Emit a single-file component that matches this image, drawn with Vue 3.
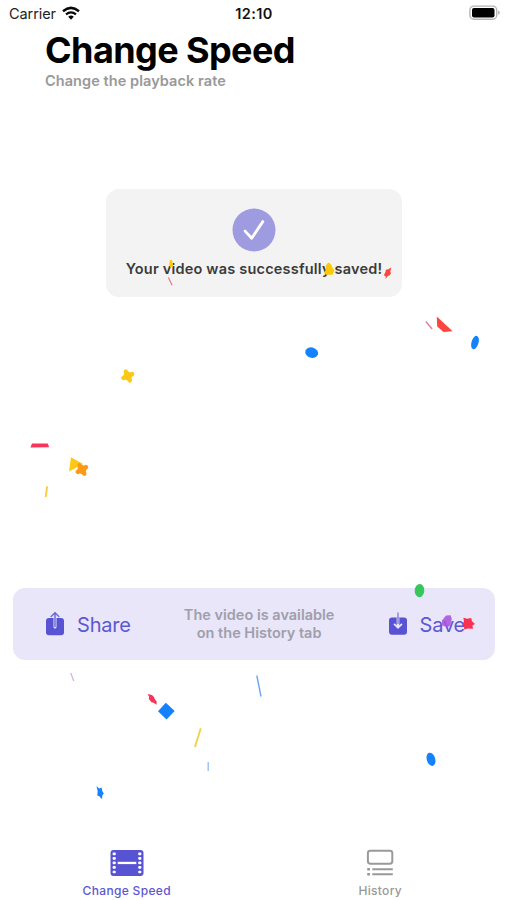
<script setup>
const ellipses = [
  { x: 311.7, y: 352.6, rx: 6.5, ry: 5.2, r: 18, c: '#1382fb' },
  { x: 475, y: 342.5, rx: 3.5, ry: 6.9, r: 17, c: '#1382fb' },
  { x: 419.5, y: 590.6, rx: 4.8, ry: 6.6, r: 3, c: '#35c75c' },
  { x: 431, y: 759.3, rx: 4.2, ry: 6.8, r: -17, c: '#1382fb' },
]
const shapes = [
  { d: 'M169.8 260.3L171.6 259.8L172.8 263L173 266.3L170.5 267.5L169.2 265Z', c: '#fdc908' },
  { d: 'M328.3 262.6L331 264.2L332.3 267.5L334.4 270.3L332.7 274.7L326 274.7L324.2 272.5L326.2 269.4L325.8 265.5Z', c: '#fdc908' },
  { d: 'M391.3 267.2L390.3 271.8L391 273.2L389.5 275.6L388 275.7L385.5 279L385.7 276.2L383.8 275.3L385.5 272L385.8 269.8L388.5 269.3Z', c: '#fb463f' },
  { d: 'M436.8 316.6L452.7 331.3L443.5 332L437.2 326.6Z', c: '#fb463f' },
  { d: 'M32 443.6L47.7 443.4L49.2 447.2L30.4 447.5Z', c: '#f53658' },
  { d: 'M71 457.3L83.2 464L69 471.4Z', c: '#fdc919' },
  { d: 'M158 711.2L165.8 702.7L174.7 711L166.5 719.6Z', c: '#1382fb' },
  { d: 'M147.6 694L152 695L154 697L155 699.5L156.7 701.4L156.5 704.8L153.5 702.8L151.5 702.3L148.8 698.9L149.2 697.1Z', c: '#f53658' },
  { d: 'M96.4 786.3L99.3 788.4L101.5 787.5L102.4 791.2L103.8 793.6L102.4 795.3L102 799.2L99.3 796.2L97.3 795.6L97.7 791Z', c: '#1382fb' },
  { d: 'M442 620.5L446 615.5L450.7 615.2L451.8 619L450.2 625.5L447.2 627.2L441.8 625.3Z', c: '#aa52de', o: .87 },
  { d: 'M463.4 617.8L467 618.7L471.2 617.9L472 621.2L475 624.1L472.4 625.6L473 628.8L467.8 628.4L464.2 629.4L464 625.7L462.6 623.4L464 621.7Z', c: '#fb3152' },
]
const slivers = [
  { p: [168.4, 277.4, 172.1, 285.2], c: '#ee7191', w: 1.2 },
  { p: [425.8, 321.5, 432.1, 329], c: '#e7819a', w: 1.5 },
  { p: [47.1, 486.3, 45.8, 497], c: '#f6ce45', w: 2 },
  { p: [70.7, 673, 73.8, 681], c: '#d9b2e4', w: 1.3 },
  { p: [256.8, 675.5, 261, 696.5], c: '#6ba6ed', w: 1.4 },
  { p: [200.8, 728.3, 195, 747], c: '#f4cf4b', w: 1.9 },
  { p: [208.2, 762, 208.2, 771], c: '#9fc5f5', w: 1.5 },
]
const clovers = [
  { x: 127.8, y: 376, r: 20, c: '#fdc919' },
  { x: 81.9, y: 469.5, r: 15, c: '#fd9915' },
]
</script>

<template>
  <main class="screen">
    <div class="status">
      <div class="carrier">
        <span>Carrier</span>
        <svg width="18" height="14" viewBox="0 0 18 14" fill="none" stroke="#080808">
          <path d="M1 5.2Q9-1.4 17 5.2" stroke-width="2.5" />
          <path d="M4 8.4Q9 4.3 14 8.4" stroke-width="2.3" />
          <path d="M6.2 10.7Q9 8.5 11.8 10.7L9 13.7Z" fill="#080808" stroke="none" />
        </svg>
      </div>
      <span class="time">12:10</span>
      <svg class="battery" width="32" height="16" viewBox="0 0 32 16">
        <rect x=".9" y="1.1" width="26.8" height="13.2" rx="4" fill="#fff" stroke="#b4b4b4" stroke-width="1.4" />
        <rect x="3" y="3" width="22.5" height="9.5" rx="2" fill="#000" />
        <path d="M29.2 5.5Q32.4 7.7 29.2 9.9Z" fill="#aaa" />
      </svg>
    </div>

    <header class="heading">
      <h1>Change Speed</h1>
      <p>Change the playback rate</p>
    </header>

    <section class="notice">
      <svg width="44" height="44" viewBox="0 0 44 44">
        <circle cx="22" cy="22" r="21.5" fill="#9f9be1" />
        <path d="M13.1 23.1L19.7 30.2L30.8 13.6" fill="none" stroke="#fff" stroke-width="2.8" stroke-linecap="round" stroke-linejoin="round" />
      </svg>
      <p>Your video was successfully saved!</p>
    </section>

    <section class="actions">
      <button class="share">
        <svg width="20" height="26" viewBox="0 0 20 26">
          <rect x="1" y="7" width="18" height="17.2" rx="3" fill="#5753d2" />
          <path d="M10 7.5V16" stroke="#e8e6fa" stroke-width="3" stroke-linecap="round" />
          <path d="M10 15.5V2M6.2 5.4L10 1.8L13.8 5.4" fill="none" stroke="#6a66d8" stroke-width="1.4" stroke-linecap="round" />
        </svg>
        <span>Share</span>
      </button>
      <p>The video is available<br>on the History tab</p>
      <button class="save">
        <svg width="20" height="26" viewBox="0 0 20 26">
          <rect x="1" y="6.5" width="18" height="17.2" rx="3" fill="#5753d2" />
          <path d="M10 6.5V15" stroke="#e8e6fa" stroke-width="2.7" />
          <path d="M10 14V15.5M6.5 13.4L10 16.7L13.5 13.4" fill="none" stroke="#e8e6fa" stroke-width="1.8" stroke-linecap="round" />
          <path d="M10 1.6V13" stroke="#7c78dc" stroke-width="1.3" />
        </svg>
        <span>Save</span>
      </button>
    </section>

    <nav class="tabs">
      <div class="tab active">
        <svg width="34" height="28" viewBox="0 0 34 28">
          <rect x=".5" y="1" width="33" height="26" rx="3" fill="#5753d2" />
          <g fill="#fff">
            <template v-for="n in 5" :key="n">
              <rect x="2.6" :y="n * 4.55 - 1.1" width="3.2" height="2.7" rx="1" />
              <rect x="28.2" :y="n * 4.55 - 1.1" width="3.2" height="2.7" rx="1" />
            </template>
            <rect x="7.7" y="12.8" width="18.6" height="2.3" />
          </g>
        </svg>
        <span>Change Speed</span>
      </div>
      <div class="tab">
        <svg width="34" height="28" viewBox="0 0 34 28" fill="none" stroke="#999">
          <rect x="4.9" y="1.7" width="24.4" height="13" rx="2.4" stroke-width="2" />
          <path d="M9.3 20.3H29.8M9.3 25.3H29.8" stroke-width="1.9" />
          <path d="M4.2 20.3H7M4.2 25.3H7" stroke-width="2.4" />
        </svg>
        <span>History</span>
      </div>
    </nav>

    <svg class="confetti" width="507" height="900" viewBox="0 0 507 900">
      <ellipse v-for="(e, i) in ellipses" :key="'e' + i" :cx="e.x" :cy="e.y" :rx="e.rx" :ry="e.ry" :fill="e.c" :transform="`rotate(${e.r} ${e.x} ${e.y})`" />
      <path v-for="(s, i) in shapes" :key="'s' + i" :d="s.d" :fill="s.c" :opacity="s.o || 1" />
      <line v-for="(l, i) in slivers" :key="'l' + i" :x1="l.p[0]" :y1="l.p[1]" :x2="l.p[2]" :y2="l.p[3]" :stroke="l.c" :stroke-width="l.w" />
      <g v-for="(k, i) in clovers" :key="'k' + i" :fill="k.c" :transform="`translate(${k.x} ${k.y}) rotate(${k.r})`">
        <rect x="-4.4" y="-4.4" width="8.8" height="8.8" rx="1" />
        <circle cx="-3.4" cy="-3.4" r="2.2" />
        <circle cx="3.4" cy="-3.4" r="2.2" />
        <circle cx="-3.4" cy="3.4" r="2.2" />
        <circle cx="3.4" cy="3.4" r="2.2" />
      </g>
    </svg>
  </main>
</template>

<style>
body { margin: 0; background: #fff; }
</style>

<style scoped>
.screen {
  position: relative;
  display: flex;
  flex-direction: column;
  width: 507px;
  height: 900px;
  overflow: hidden;
  background: #fff;
  font-family: Inter, "Liberation Sans", sans-serif;
}
h1, p { margin: 0; }
span, h1, p { white-space: nowrap; }
svg { display: block; flex: none; }
.status {
  display: grid;
  grid-template-columns: 1fr auto 1fr;
  align-items: center;
  height: 26px;
  padding: 0 6px 0 9px;
  box-sizing: border-box;
  font-size: 14.5px;
  color: #222;
}
.carrier { display: flex; align-items: center; gap: 6px; letter-spacing: -0.08px; }
.time { font-weight: 600; color: #111; letter-spacing: 0.4px; margin-right: 2px; }
.battery { justify-self: end; }
.heading { padding: 2px 45px 0; height: 163px; box-sizing: border-box; }
h1 {
  font-size: 36px;
  line-height: 44px;
  font-weight: 700;
  letter-spacing: -0.58px;
  color: #000;
}
.heading p {
  font-size: 14.5px;
  line-height: 18px;
  font-weight: 600;
  letter-spacing: 0.07px;
  color: #999;
}
.notice {
  display: flex;
  flex-direction: column;
  align-items: center;
  gap: 8px;
  width: 296px;
  height: 108px;
  margin-left: 106px;
  padding-top: 19px;
  box-sizing: border-box;
  border-radius: 13px;
  background: #f3f3f3;
}
.notice p {
  font-size: 14.5px;
  line-height: 18px;
  font-weight: 600;
  letter-spacing: 0.2px;
  color: #3b3b3c;
}
.actions {
  display: flex;
  justify-content: space-between;
  align-items: center;
  height: 72px;
  margin: 290.5px 12px 0 13px;
  padding: 1px 30px 0 32px;
  box-sizing: border-box;
  border-radius: 12px;
  background: #e8e6f8;
}
button {
  display: flex;
  align-items: center;
  gap: 12px;
  padding: 0;
  border: 0;
  background: none;
  font: 400 20px/26px Inter, "Liberation Sans", sans-serif;
  letter-spacing: -0.2px;
  color: #5c57d3;
}
button span { padding-top: 2px; }
.actions p {
  text-align: center;
  font-size: 14.5px;
  line-height: 18px;
  font-weight: 600;
  color: #a09eac;
}
.tabs {
  display: grid;
  grid-template-columns: 1fr 1fr;
  margin-top: auto;
  height: 51px;
}
.tab {
  display: flex;
  flex-direction: column;
  align-items: center;
  gap: 6px;
  font-size: 12px;
  line-height: 16px;
  font-weight: 500;
  letter-spacing: 0.32px;
  color: #999;
}
.tab.active { color: #5c57d3; }
.confetti { position: absolute; inset: 0; pointer-events: none; }
</style>
